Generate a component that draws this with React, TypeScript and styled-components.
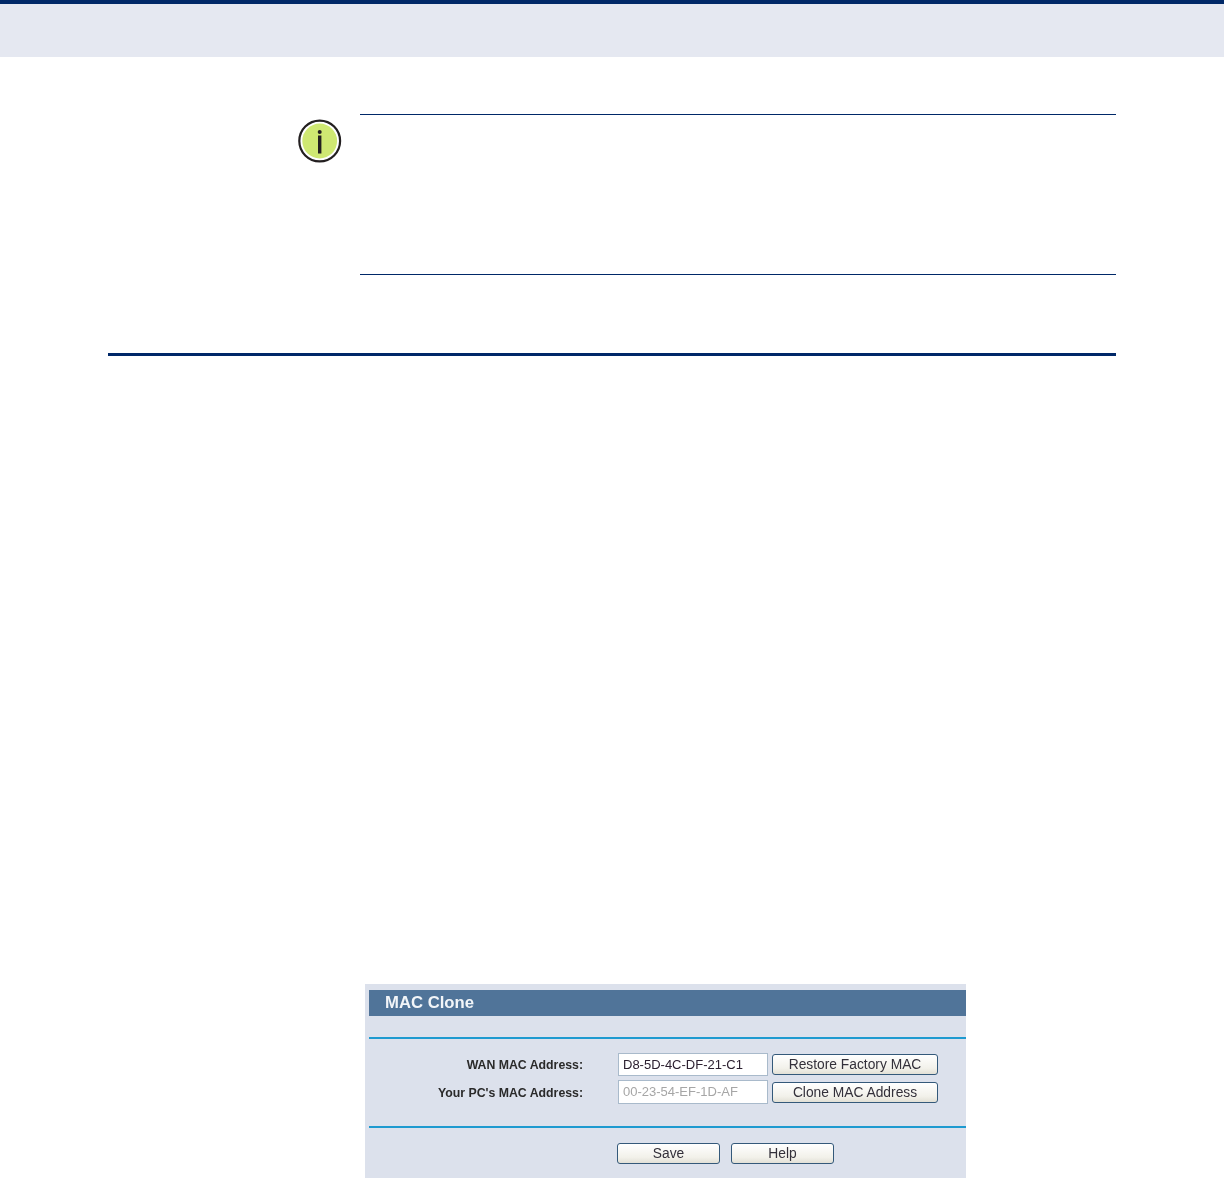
import React from "react";
import styled, { createGlobalStyle } from "styled-components";

const Global = createGlobalStyle`
  html, body { margin: 0; padding: 0; background: #fff; }
  body { font-family: "Liberation Sans", Arial, sans-serif; }
`;

const Page = styled.div`
  width: 1224px;
  height: 1178px;
  overflow: hidden;
`;

const TopBand = styled.header`
  height: 53px;
  background: #e5e8f1;
  border-top: 4px solid #002868;
`;

const Main = styled.main`
  padding: 57px 108px 0;
`;

const NoteRow = styled.section`
  display: flex;
  gap: 18px;
  margin-left: 190px;
`;

const NoteIcon = styled.svg`
  flex: none;
  width: 44px;
  height: 44px;
  margin-top: 5px;
`;

const NoteBody = styled.div`
  flex: 1;
  height: 159px;
  border-top: 1px solid #002868;
  border-bottom: 1px solid #002868;
`;

const Rule = styled.hr`
  height: 3px;
  margin: 78px 0 0;
  border: 0;
  background: #002868;
`;

const Panel = styled.section`
  width: 597px;
  height: 188px;
  margin: 628px 0 0 257px;
  padding: 6px 0 0 4px;
  background: #dce1ec;
  filter: blur(0.45px);
`;

const PanelTitle = styled.h2`
  height: 26px;
  margin: 0;
  padding-left: 16px;
  background: #507499;
  color: #f2f5f8;
  font-size: 16.7px;
  font-weight: 700;
  line-height: 25px;
`;

const Divider = styled.div<{ $top: number }>`
  height: 2px;
  margin-top: ${(p) => p.$top}px;
  background: #1e9ad0;
`;

const Form = styled.div`
  display: grid;
  grid-template-columns: 249px 154px 166px;
  grid-template-rows: 23px 24px;
  row-gap: 4px;
  align-items: center;
  margin-top: 14px;
`;

const Label = styled.label`
  padding-right: 35px;
  padding-top: 1px;
  color: #2a2a2a;
  font-size: 12.3px;
  font-weight: 700;
  text-align: right;
  white-space: nowrap;
`;

const Field = styled.div<{ $disabled?: boolean }>`
  box-sizing: border-box;
  align-self: stretch;
  width: 150px;
  padding-left: 4px;
  background: #fff;
  border: 1px solid #a9bacb;
  color: ${(p) => (p.$disabled ? "#a6a6a6" : "#2c2030")};
  font-size: 13px;
  line-height: 22px;
  white-space: nowrap;
`;

const Button = styled.button<{ $width: number }>`
  box-sizing: border-box;
  width: ${(p) => p.$width}px;
  height: 21px;
  padding: 1px 0 0;
  border: 1.5px solid #34597a;
  border-radius: 3px;
  background: linear-gradient(#ffffff, #f2f1ea 70%, #e2e0d6);
  color: #33303a;
  font-family: inherit;
  font-size: 13.8px;
  line-height: 18px;
  white-space: nowrap;
`;

const Actions = styled.div`
  display: flex;
  gap: 11px;
  margin: 15px 0 0 248px;
`;

const InfoIcon = () => (
  <NoteIcon viewBox="0 0 44 44" aria-hidden="true">
    <circle cx="21.7" cy="22" r="20.4" fill="#fff" stroke="#231f20" strokeWidth="2.2" />
    <circle cx="21.7" cy="22" r="17.4" fill="#cfe872" />
    <circle cx="21.7" cy="13" r="2" fill="#231f20" />
    <rect x="20" y="16.5" width="3.4" height="18" fill="#231f20" />
  </NoteIcon>
);

export default function App() {
  return (
    <Page>
      <Global />
      <TopBand />
      <Main>
        <NoteRow>
          <InfoIcon />
          <NoteBody />
        </NoteRow>
        <Rule />
        <Panel>
          <PanelTitle>MAC Clone</PanelTitle>
          <Divider $top={21} />
          <Form>
            <Label>WAN MAC Address:</Label>
            <Field>D8-5D-4C-DF-21-C1</Field>
            <Button $width={166}>Restore Factory MAC</Button>
            <Label>Your PC's MAC Address:</Label>
            <Field $disabled>00-23-54-EF-1D-AF</Field>
            <Button $width={166}>Clone MAC Address</Button>
          </Form>
          <Divider $top={22} />
          <Actions>
            <Button $width={103}>Save</Button>
            <Button $width={103}>Help</Button>
          </Actions>
        </Panel>
      </Main>
    </Page>
  );
}
